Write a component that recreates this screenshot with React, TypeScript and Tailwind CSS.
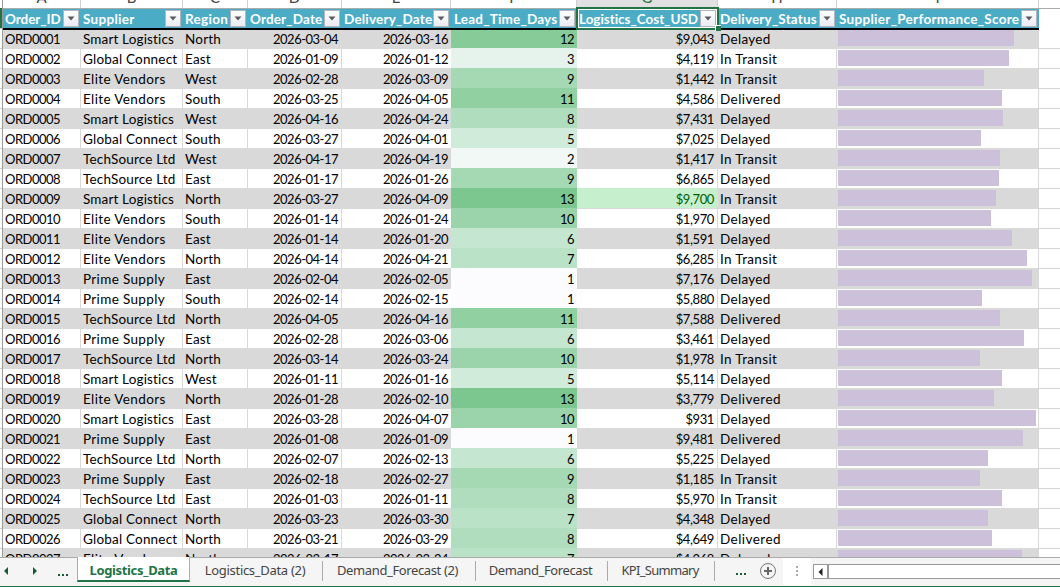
type Row = [string, string, string, string, number, string, string, number];

const rows: Row[] = [
  ["Smart Logistics", "North", "2026-03-04", "2026-03-16", 12, "$9,043", "Delayed", 176],
  ["Global Connect", "East", "2026-01-09", "2026-01-12", 3, "$4,119", "In Transit", 171],
  ["Elite Vendors", "West", "2026-02-28", "2026-03-09", 9, "$1,442", "In Transit", 146],
  ["Elite Vendors", "South", "2026-03-25", "2026-04-05", 11, "$4,586", "Delivered", 164],
  ["Smart Logistics", "West", "2026-04-16", "2026-04-24", 8, "$7,431", "Delayed", 165],
  ["Global Connect", "South", "2026-03-27", "2026-04-01", 5, "$7,025", "Delayed", 143],
  ["TechSource Ltd", "West", "2026-04-17", "2026-04-19", 2, "$1,417", "In Transit", 162],
  ["TechSource Ltd", "East", "2026-01-17", "2026-01-26", 9, "$6,865", "Delayed", 161],
  ["Smart Logistics", "North", "2026-03-27", "2026-04-09", 13, "$9,700", "In Transit", 158],
  ["Elite Vendors", "South", "2026-01-14", "2026-01-24", 10, "$1,970", "Delayed", 153],
  ["Elite Vendors", "East", "2026-01-14", "2026-01-20", 6, "$1,591", "Delayed", 174],
  ["Elite Vendors", "North", "2026-04-14", "2026-04-21", 7, "$6,285", "In Transit", 189],
  ["Prime Supply", "East", "2026-02-04", "2026-02-05", 1, "$7,176", "Delayed", 194],
  ["Prime Supply", "South", "2026-02-14", "2026-02-15", 1, "$5,880", "Delayed", 144],
  ["TechSource Ltd", "North", "2026-04-05", "2026-04-16", 11, "$7,588", "Delivered", 162],
  ["Prime Supply", "East", "2026-02-28", "2026-03-06", 6, "$3,461", "Delayed", 186],
  ["TechSource Ltd", "North", "2026-03-14", "2026-03-24", 10, "$1,978", "In Transit", 142],
  ["Smart Logistics", "West", "2026-01-11", "2026-01-16", 5, "$5,114", "Delayed", 164],
  ["Elite Vendors", "North", "2026-01-28", "2026-02-10", 13, "$3,779", "Delivered", 156],
  ["Smart Logistics", "East", "2026-03-28", "2026-04-07", 10, "$931", "Delayed", 198],
  ["Prime Supply", "East", "2026-01-08", "2026-01-09", 1, "$9,481", "Delivered", 185],
  ["TechSource Ltd", "North", "2026-02-07", "2026-02-13", 6, "$5,225", "Delayed", 150],
  ["Prime Supply", "East", "2026-02-18", "2026-02-27", 9, "$1,185", "In Transit", 142],
  ["TechSource Ltd", "East", "2026-01-03", "2026-01-11", 8, "$5,970", "In Transit", 164],
  ["Global Connect", "North", "2026-03-23", "2026-03-30", 7, "$4,348", "Delayed", 150],
  ["Global Connect", "North", "2026-03-21", "2026-03-29", 8, "$4,649", "Delivered", 154],
  ["Elite Vendors", "North", "2026-03-17", "2026-03-24", 7, "$4,268", "Delayed", 184],
];

const scale: Record<number, string> = {
  1: "bg-[#fcfcff]",
  2: "bg-[#f1f8f6]",
  3: "bg-[#e6f3ec]",
  5: "bg-[#d0ebda]",
  6: "bg-[#c5e6d0]",
  7: "bg-[#bae2c7]",
  8: "bg-[#b0ddbe]",
  9: "bg-[#a5d9b4]",
  10: "bg-[#9bd4aa]",
  11: "bg-[#90d0a1]",
  12: "bg-[#86cb98]",
  13: "bg-[#7bc78f]",
};

const columns = "grid grid-cols-[78px_102px_65px_94px_109px_126px_141px_119px_202px_22px]";

const headers: [string, string, string][] = [
  ["Order_ID", "A", "tracking-[-0.05px]"],
  ["Supplier", "B", "tracking-[0.3px]"],
  ["Region", "C", "tracking-[0.3px]"],
  ["Order_Date", "D", "tracking-[0.15px]"],
  ["Delivery_Date", "E", "tracking-[0.2px]"],
  ["Lead_Time_Days", "F", "tracking-[0.2px]"],
  ["Logistics_Cost_USD", "G", "tracking-[-0.03px]"],
  ["Delivery_Status", "H", "tracking-[0.18px]"],
  ["Supplier_Performance_Score", "I", "tracking-[0.3px]"],
];

const textTracking: Record<string, string> = {
  "Smart Logistics": "tracking-[0.15px]",
  "Global Connect": "tracking-[0.2px]",
  "Elite Vendors": "tracking-[0.38px]",
  "TechSource Ltd": "tracking-[0.18px]",
  "Prime Supply": "tracking-[0.35px]",
  Delayed: "tracking-[0.3px]",
  Delivered: "tracking-[0.45px]",
  "In Transit": "tracking-[0.35px]",
};

function FilterButton() {
  return (
    <span className="flex h-[17px] w-4 shrink-0 items-center justify-center border border-[#b5b5bd] bg-linear-to-b from-white to-[#e9ebf1]">
      <svg width="8" height="5" viewBox="0 0 8 5">
        <path d="M0.5 0.5H7.5L4 4.5Z" fill="#5a5a5f" />
      </svg>
    </span>
  );
}

function DataRow({ row, index }: { row: Row; index: number }) {
  const [supplier, region, ordered, delivered, days, cost, status, score] = row;
  const gray = index % 2 === 0;
  const plain = gray ? "bg-[#d9d9d9] pt-[3px]" : "border-t border-[#d9d9d9] bg-white pt-[2px]";
  const cell = gray ? plain : `${plain} border-r`;
  const text = "pl-[2px] text-[13.5px]";
  const num = "text-right tracking-[-0.5px]";
  const inset = gray ? "pr-[4px]" : "pr-[3px]";
  const costCell = cost === "$9,700" ? "bg-[#c6efce] pt-[3px] pr-[4px] text-[#006100]" : `${cell} ${inset}`;
  return (
    <div className={`${columns} h-5 text-[13px] leading-[17px] whitespace-nowrap text-black`}>
      <div className={`${cell} pl-[2px] tracking-[-0.5px]`}>ORD{String(index + 1).padStart(4, "0")}</div>
      <div className={`${cell} ${text} ${textTracking[supplier]}`}>{supplier}</div>
      <div className={`${cell} ${text} tracking-[0.2px]`}>{region}</div>
      <div className={`${cell} ${num} ${inset}`}>{ordered}</div>
      <div className={`${plain} ${num} pr-[3px]`}>{delivered}</div>
      <div className={`pt-[3px] pr-[3px] ${num} ${scale[days]}`}>{days}</div>
      <div className={`text-right tracking-[-0.4px] ${costCell}`}>{cost}</div>
      <div className={`${cell} ${text} ${textTracking[status]}`}>{status}</div>
      <div className={`pl-px ${gray ? "bg-[#d9d9d9] pt-[2px]" : "border-t border-r border-[#d9d9d9] bg-white pt-px"}`}>
        <div className="h-4 bg-[#ccc0da]" style={{ width: score }} />
      </div>
      <div className="border-t border-[#d4d4d4] bg-white" />
    </div>
  );
}

function Tab({ label, size, spacing }: { label: string; size: string; spacing: string }) {
  return (
    <div className={`${size} ${spacing} mt-[3px] flex h-5 items-center justify-center border-r border-[#ababab] text-[13px] whitespace-nowrap text-[#444]`}>
      {label}
    </div>
  );
}

export default function App() {
  return (
    <div className="flex h-[587px] w-[1060px] flex-col overflow-hidden bg-white font-['Lato',sans-serif] [font-variant-ligatures:none]">
      <div className="flex h-[557px] overflow-hidden">
        <div className="flex w-[3px] shrink-0 flex-col border-r border-[#9b9b9b] bg-white">
          <div className="h-2 shrink-0" />
          <div className="h-5 w-[2px] shrink-0 bg-[#217346]" />
          {rows.map((_, i) => (
            <div key={i} className="h-5 shrink-0 border-t border-[#d0d0d0]" />
          ))}
        </div>
        <div className="shrink-0">
          <div className={`${columns} h-2 overflow-hidden text-[15px] text-[#444]`}>
            {headers.map(([name, letter]) => (
              <div
                key={name}
                className={`flex h-2 justify-center overflow-hidden border-r border-[#d0d0d0] leading-5 ${letter === "G" ? "bg-[#e1e1e1] text-[#217346]" : ""}`}
              >
                <span className="mt-[-13px]">{letter}</span>
              </div>
            ))}
            <div />
          </div>
          <div className={`${columns} relative h-[21px] text-[13.5px] font-bold text-white`}>
            {headers.map(([name, letter, spacing]) => (
              <div
                key={name}
                className={`flex items-start justify-between border-t border-b-2 border-t-[#ababab] border-b-black bg-[#4bacc6] pt-px pr-[2px] ${letter === "F" ? "pl-[3px]" : "pl-[2px]"}`}
              >
                <span className={`${spacing} w-0 pt-px leading-[17px] whitespace-nowrap`}>{name}</span>
                <FilterButton />
              </div>
            ))}
            <div className="border-t border-t-[#ababab] bg-white" />
            <div className="pointer-events-none absolute -top-px left-[573px] h-[23px] w-[143px] border-2 border-[#217346]">
              <div className="h-full w-full border border-white" />
              <div className="absolute -right-[4px] -bottom-[3px] h-[6px] w-[6px] border-t border-l border-white bg-[#217346]" />
            </div>
          </div>
          <div className="-mt-px">
            {rows.map((row, i) => (
              <DataRow key={i} row={row} index={i} />
            ))}
          </div>
        </div>
      </div>

      <div className="flex h-[29px] shrink-0 border-t border-[#ababab] bg-[#f5f5f5] font-['Noto_Sans',sans-serif]">
        <div className="flex w-[77px] shrink-0 pt-2">
          <svg width="77" height="16" viewBox="0 0 77 16" fill="#185c37">
            <path d="M8 1V9L4 5ZM33 1V9L37 5Z" />
            <path d="M58 8h2v2h-2zM62 8h2v2h-2zM66 8h2v2h-2z" />
          </svg>
        </div>
        <div className="-mt-px flex h-[25px] w-[113px] shrink-0 items-center justify-center border-x border-b-2 border-x-[#ababab] border-b-[#217346] bg-white pt-[4px] text-[13px] font-bold tracking-[-0.35px] text-[#217346]">
          Logistics_Data
        </div>
        <Tab label="Logistics_Data (2)" size="w-[133px] pr-[2px]" spacing="tracking-[-0.3px]" />
        <Tab label="Demand_Forecast (2)" size="w-[153px] pr-[3px]" spacing="tracking-[-0.38px]" />
        <Tab label="Demand_Forecast" size="w-[132px] pr-[2px]" spacing="tracking-[-0.4px]" />
        <Tab label="KPI_Summary" size="w-[107px] pr-[2px]" spacing="tracking-[-0.7px]" />
        <div className="w-[68px] shrink-0">
          <svg width="68" height="27" viewBox="0 0 68 27">
            <path d="M21 15h2v2h-2zM25 15h2v2h-2zM29 15h2v2h-2z" fill="#185c37" />
            <circle cx="53" cy="13" r="7.5" fill="none" stroke="#777" />
            <path d="M49 12h3v-3h2v3h3v2h-3v3h-2v-3h-3z" fill="#666" />
          </svg>
        </div>
        <div className="h-[27px] w-7 shrink-0 bg-white">
          <svg width="28" height="27" viewBox="0 0 28 27" fill="#ababab">
            <path d="M13 8h2v2h-2zM13 12h2v2h-2zM13 16h2v2h-2z" />
          </svg>
        </div>
        <div className="mt-[6px] ml-[2px] flex h-[15px] flex-1 border border-r-0 border-[#999] bg-white">
          <div className="flex w-[15px] items-center justify-center border-r-2 border-[#999]">
            <svg width="5" height="8" viewBox="0 0 5 8">
              <path d="M4.5 0V8L0.5 4Z" fill="#222" />
            </svg>
          </div>
        </div>
      </div>
      <div className="h-px bg-[#217346]" />
    </div>
  );
}
